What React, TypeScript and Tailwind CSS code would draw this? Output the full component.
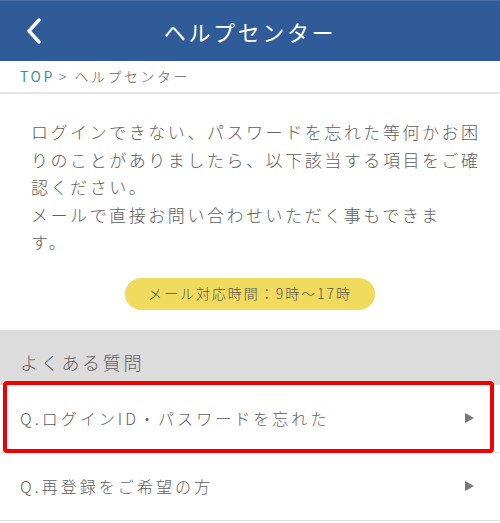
import React from 'react';

const jp = { fontFamily: '"Noto Sans CJK JP", "Noto Sans", sans-serif' };

const questions = [
  { id: 'login', label: 'Q.ログインID・パスワードを忘れた', marked: true },
  { id: 'rereg', label: 'Q.再登録をご希望の方', marked: false },
];

const Arrow: React.FC = () => (
  <svg width="9" height="10" viewBox="0 0 9 10" className="shrink-0">
    <path d="M0 0 L9 5 L0 10 Z" fill="#777" />
  </svg>
);

export default function App() {
  return (
    <div className="w-[500px] h-[523px] bg-white overflow-hidden font-light" style={jp}>
      {/* header */}
      <header className="h-[61px] bg-[#2f5b99] border-t border-[#4a73ad] flex items-center relative">
        <button className="w-[66px] h-full flex items-center justify-center">
          <svg width="17" height="26" viewBox="0 0 17 26">
            <path d="M14 2 L4 13 L14 24" fill="none" stroke="#fff" strokeWidth="3.4" strokeLinecap="round" strokeLinejoin="round" />
          </svg>
        </button>
        <h1 className="absolute left-0 right-0 text-center text-white text-[22px] font-normal tracking-[0.12em] pointer-events-none">
          ヘルプセンター
        </h1>
      </header>

      {/* breadcrumb */}
      <nav className="h-[33px] flex items-center px-5 text-[14px] tracking-[0.18em] border-b-2 border-[#e6e6e6]">
        <span className="text-[#3e8fa6] font-normal">TOP</span>
        <span className="text-[#666] ml-1">&gt; ヘルプセンター</span>
      </nav>

      {/* intro */}
      <section className="pt-[24px] pb-[20px] flex flex-col items-center">
        <p className="w-full pl-[31px] pr-[20px] text-[17px] leading-[27.5px] tracking-[0.15em] text-[#5e5e5e] whitespace-nowrap">
          ログインできない、パスワードを忘れた等何かお困<br />
          りのことがありましたら、以下該当する項目をご確<br />
          認ください。<br />
          メールで直接お問い合わせいただく事もできま<br />
          す。
        </p>
        <div className="mt-[22px] w-[250px] h-[32px] rounded-full bg-[#f1db5f] flex items-center justify-center text-[14px] tracking-[0.14em] text-[#555]">
          メール対応時間：9時〜17時
        </div>
      </section>

      {/* faq */}
      <section>
        <div className="h-[55px] bg-[#dcdcdc] flex items-center px-5 pt-[10px]">
          <h2 className="text-[18px] tracking-[0.15em] text-[#5e5e5e]">よくある質問</h2>
        </div>
        <ul>
          {questions.map((q) => (
            <li key={q.id} className="relative h-[68px] border-b border-[#e2e2e2] flex items-center justify-between pl-5 pr-[26px]">
              <span className="text-[16px] tracking-[0.19em] text-[#5e5e5e]">{q.label}</span>
              <Arrow />
              {q.marked && (
                <div className="absolute left-[3px] right-[6px] top-[-4px] bottom-[-1px] border-[4px] border-[#f20000] rounded-[4px] pointer-events-none" />
              )}
            </li>
          ))}
        </ul>
      </section>
    </div>
  );
}
